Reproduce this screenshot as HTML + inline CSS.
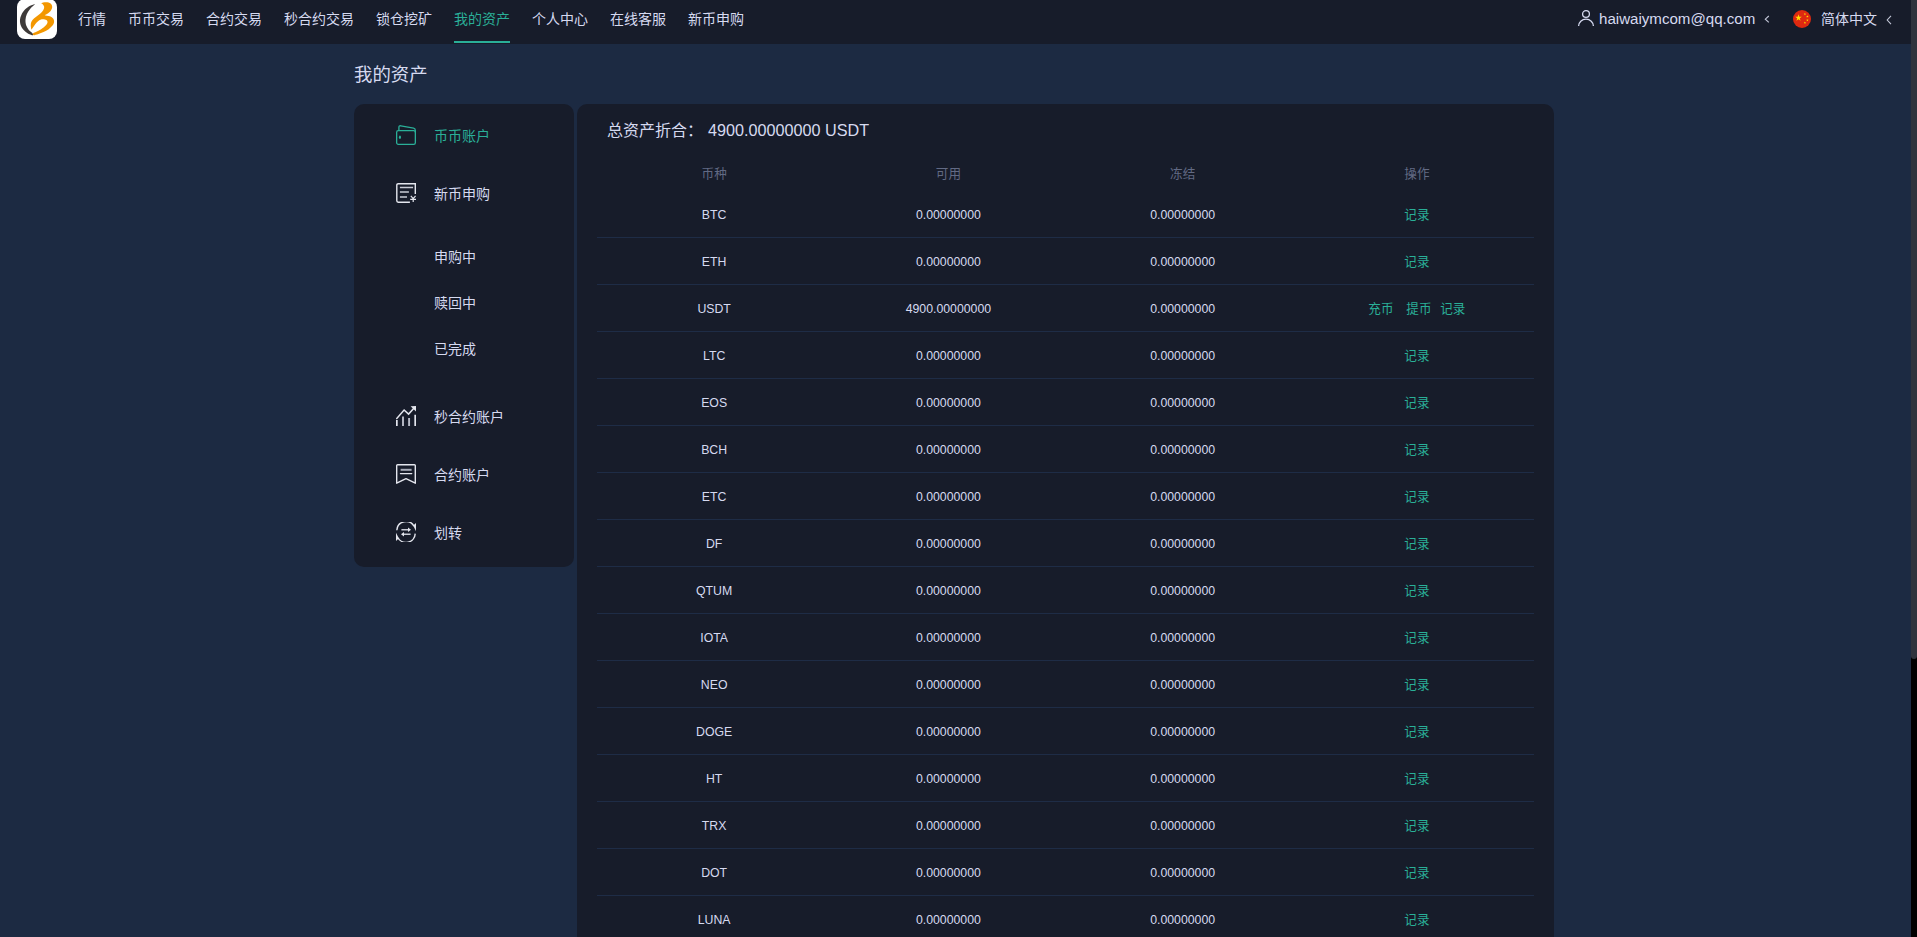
<!DOCTYPE html>
<html lang="zh-CN">
<head>
<meta charset="utf-8">
<title>我的资产</title>
<style>
*{box-sizing:border-box;margin:0;padding:0}
html,body{width:1917px;height:937px;overflow:hidden;background:#1c2a42}
body{position:relative;font-family:"Liberation Sans","Noto Sans CJK SC",sans-serif;color:#d6daf0;font-size:14px}
a{color:inherit;text-decoration:none}
/* header */
#hd{position:absolute;left:0;top:0;width:1911px;height:44px;background:#171c2a}
#logo{position:absolute;left:17px;top:-1px;width:40px;height:40px}
#nav{position:absolute;left:67px;top:0;height:44px;display:flex}
#nav a{display:block;height:44px;line-height:38px;margin:0 11px;font-size:14px;color:#d6daf0;position:relative;white-space:nowrap}
#nav a.on{color:#2aaf98}
#nav a.on:after{content:"";position:absolute;left:0;right:0;top:41px;height:2px;background:#2aaf98}
#usr{position:absolute;left:1577px;top:0;height:44px;line-height:38px;font-size:15.1px;white-space:nowrap}
#usr>svg:first-child{position:absolute;left:0;top:9px}
#usr span.em{position:absolute;left:22px;top:0}
.cv{position:absolute}
#lang{position:absolute;left:1793px;top:0;height:44px;line-height:38px;font-size:14px;white-space:nowrap}
#lang>svg:first-child{position:absolute;left:0;top:10px}
#lang span.t{position:absolute;left:28px;top:0}
/* scrollbar */
#sb{position:absolute;left:1911px;top:0;width:6px;height:937px;background:#000}
#sb i{position:absolute;left:0;top:0;width:6px;height:659px;background:#2f333d;border-radius:0 0 3px 3px}
/* title */
#ttl{position:absolute;left:354px;top:61px;font-size:18.4px;line-height:28px;color:#d6daf0}
/* sidebar */
#side{position:absolute;left:354px;top:104px;width:220px;height:463px;background:#171c2a;border-radius:10px}
#side .it{position:absolute;left:0;width:220px;height:24px;line-height:24px;font-size:14px;color:#d6daf0}
#side .it svg{position:absolute;left:42px;top:2px;width:20px;height:20px}
#side .it span{position:absolute;left:80px;top:1px;white-space:nowrap}
#side .it.sub span{top:0}
#side .it.on{color:#2aaf98}
/* main */
#main{position:absolute;left:577px;top:104px;width:977px;height:900px;background:#171c2a;border-radius:10px 10px 0 0}
#tot{position:absolute;left:30px;top:15px;font-size:16px;line-height:24px;white-space:nowrap}
#tot b{font-weight:normal;position:absolute;left:101px;top:-1px;font-size:16.2px}
#tb{position:absolute;left:20px;top:51px;width:937px}
.r{display:flex;height:47px;line-height:46px;padding-top:1px;border-bottom:1px solid #1e2c46;font-size:12.3px;color:#d6daf0}
.r.h{height:36px;line-height:36px;padding-top:1px;border-bottom:none;color:#626a84}
.r div{flex:0 0 25%;text-align:center;white-space:nowrap}
.r a{color:#2aaf98}
.r a,.r.h{font-size:12.6px}
.r a+a{margin-left:12.8px}
.r a+a+a{margin-left:8.8px}
</style>
</head>
<body>
<div id="hd">
  <svg id="logo" viewBox="0 0 40 40"><rect x="0" y="0" width="40" height="40" rx="8" fill="#fff"/><path fill="#3e3a39" d="M18.09,4.97C17.26,5.27 14.78,5.82 13.10,6.76C11.41,7.70 9.41,9.11 7.97,10.60C6.53,12.10 5.28,14.02 4.45,15.73C3.62,17.44 3.08,19.04 2.98,20.85C2.87,22.66 3.19,24.91 3.81,26.61C4.43,28.32 5.57,29.81 6.69,31.10C7.81,32.38 9.09,33.39 10.53,34.30C11.97,35.20 14.54,36.16 15.34,36.54C15.44,36.27 16.56,35.84 15.98,34.94C15.39,34.03 12.94,32.48 11.81,31.10C10.69,29.71 9.81,28.32 9.25,26.61C8.70,24.91 8.38,22.77 8.49,20.85C8.59,18.93 9.13,16.90 9.89,15.09C10.66,13.27 11.73,11.65 13.10,9.96C14.46,8.28 17.26,5.80 18.09,4.97Z"/><path fill="#f39700" d="M23.98,4.07C24.83,3.93 27.50,3.17 29.10,3.24C30.70,3.32 32.57,3.72 33.59,4.52C34.60,5.32 35.19,6.82 35.19,8.04C35.19,9.27 34.39,10.76 33.59,11.89C32.79,13.01 31.34,14.02 30.38,14.77C29.42,15.51 27.40,15.94 27.82,16.37C28.25,16.79 31.56,16.79 32.95,17.33C34.33,17.86 35.45,18.66 36.15,19.57C36.84,20.48 37.21,21.60 37.11,22.77C37.00,23.95 36.41,25.39 35.51,26.61C34.60,27.84 33.16,29.07 31.66,30.13C30.17,31.20 28.25,32.22 26.54,33.02C24.83,33.82 23.07,34.38 21.42,34.94C19.77,35.49 17.42,36.11 16.62,36.35C16.51,36.03 15.18,35.19 15.98,34.43C16.78,33.66 19.66,32.72 21.42,31.74C23.18,30.75 25.15,29.60 26.54,28.53C27.93,27.47 29.10,26.40 29.74,25.33C30.38,24.27 30.70,22.93 30.38,22.13C30.06,21.33 28.89,20.80 27.82,20.53C26.76,20.26 25.15,20.21 23.98,20.53C22.81,20.85 21.74,21.65 20.78,22.45C19.82,23.25 19.02,24.32 18.22,25.33C17.42,26.35 16.62,27.63 15.98,28.53C15.34,29.44 14.64,30.40 14.38,30.78C14.27,30.08 13.74,27.95 13.74,26.61C13.74,25.28 13.84,23.95 14.38,22.77C14.91,21.60 15.98,20.53 16.94,19.57C17.90,18.61 19.07,17.86 20.14,17.01C21.21,16.15 22.33,15.41 23.34,14.45C24.35,13.49 25.58,12.31 26.22,11.25C26.86,10.18 27.24,9.00 27.18,8.04C27.13,7.08 26.44,6.14 25.90,5.48C25.37,4.82 24.30,4.31 23.98,4.07Z"/></svg>
  <div id="nav">
    <a>行情</a><a>币币交易</a><a>合约交易</a><a>秒合约交易</a><a>锁仓挖矿</a><a class="on">我的资产</a><a>个人中心</a><a>在线客服</a><a>新币申购</a>
  </div>
  <div id="usr"><svg width="18" height="18" viewBox="0 0 18 18" fill="none" stroke="#d6daf0" stroke-width="1.3"><circle cx="9" cy="5.05" r="3.4"/><path d="M1.6,17.1a7.4,6.9 0 0 1 14.8,0"/></svg><span class="em">haiwaiymcom@qq.com</span><svg class="cv" style="left:187px;top:15px" width="6" height="9" viewBox="0 0 6 9" fill="none" stroke="#c3c7d8" stroke-width="1.1"><path d="M4.8,1 L1.3,4.2 L4.8,7.4"/></svg></div>
  <div id="lang"><svg width="18" height="18" viewBox="0 0 18 18"><circle cx="9" cy="9" r="9" fill="#de2910"/><path fill="#ffde00" transform="translate(5.5,7.8) scale(3.5)" d="M0,-1 L0.2245,-0.309 L0.951,-0.309 L0.3633,0.118 L0.5878,0.809 L0,0.382 L-0.5878,0.809 L-0.3633,0.118 L-0.951,-0.309 L-0.2245,-0.309Z"/><path fill="#ffde00" transform="translate(11.9,4.1) scale(1.3)" d="M0,-1 L0.2245,-0.309 L0.951,-0.309 L0.3633,0.118 L0.5878,0.809 L0,0.382 L-0.5878,0.809 L-0.3633,0.118 L-0.951,-0.309 L-0.2245,-0.309Z"/><path fill="#ffde00" transform="translate(14.4,6.5) scale(1.3)" d="M0,-1 L0.2245,-0.309 L0.951,-0.309 L0.3633,0.118 L0.5878,0.809 L0,0.382 L-0.5878,0.809 L-0.3633,0.118 L-0.951,-0.309 L-0.2245,-0.309Z"/><path fill="#ffde00" transform="translate(14.4,10.2) scale(1.3)" d="M0,-1 L0.2245,-0.309 L0.951,-0.309 L0.3633,0.118 L0.5878,0.809 L0,0.382 L-0.5878,0.809 L-0.3633,0.118 L-0.951,-0.309 L-0.2245,-0.309Z"/><path fill="#ffde00" transform="translate(11.9,12.7) scale(1.3)" d="M0,-1 L0.2245,-0.309 L0.951,-0.309 L0.3633,0.118 L0.5878,0.809 L0,0.382 L-0.5878,0.809 L-0.3633,0.118 L-0.951,-0.309 L-0.2245,-0.309Z"/></svg><span class="t">简体中文</span><svg class="cv" style="left:93px;top:15px" width="6" height="10" viewBox="0 0 6 10" fill="none" stroke="#c3c7d8" stroke-width="1.1"><path d="M5,0.8 L1.2,5 L5,9.2"/></svg></div>
</div>
<div id="sb"><i></i></div>
<div id="ttl">我的资产</div>
<div id="side">
  <div class="it on" style="top:19px"><svg viewBox="0 0 20 20" fill="none" stroke="#2aaf98" stroke-width="1.3" stroke-linejoin="round"><rect x="0.65" y="5.6" width="18.7" height="13.75" rx="1.6"/><path d="M2.9,5.6 V2.4 Q2.9,0.5 4.8,0.8 L17.6,3.2 Q19.35,3.6 19.35,5.4 V7.5"/><ellipse cx="3.95" cy="12.3" rx="1.05" ry="1.7" fill="#2aaf98" stroke="none"/></svg><span>币币账户</span></div>
  <div class="it" style="top:77px"><svg viewBox="0 0 20 20" fill="none" stroke="#e4e6ee" stroke-width="1.4"><path d="M19.3,11 V0.7 H2.2 Q0.8,0.7 0.8,2.1 V17.8 Q0.8,19.2 2.2,19.2 H13.9"/><path stroke-width="1.5" stroke="#c9ccd6" d="M3.9,4.4 H17.1 M3.9,9 H12.9 M3.9,13.9 H11"/><path stroke-width="1.2" d="M14.8,12.9 L17.2,15.6 L19.6,12.9 M14.2,16.3 H20 M17.2,15.4 V19.1"/></svg><span>新币申购</span></div>
  <div class="it sub" style="top:141px"><span>申购中</span></div>
  <div class="it sub" style="top:187px"><span>赎回中</span></div>
  <div class="it sub" style="top:233px"><span>已完成</span></div>
  <div class="it" style="top:300px"><svg viewBox="0 0 20 20" fill="none" stroke="#e4e6ee" stroke-width="1.5"><path d="M0.3,13 L8.1,4 L12.6,8.1 L18.3,1.8"/><path fill="#e4e6ee" stroke="none" d="M14.6,0.3 L20,0 L20,5.4Z"/><path stroke-width="1.7" d="M0.85,14 V20 M19.2,8.8 V20"/><path stroke-width="1.9" stroke="#b9bcc8" d="M7,10.4 V20 M13.1,12 V20"/></svg><span>秒合约账户</span></div>
  <div class="it" style="top:358px"><svg viewBox="0 0 20 20" fill="none" stroke="#e4e6ee" stroke-width="1.4" stroke-linejoin="round"><path d="M1.6,0.7 H18.4 Q19.3,0.7 19.3,1.6 V19.2 L10,14.7 L0.7,19.2 V1.6 Q0.7,0.7 1.6,0.7Z"/><path stroke="#a9adba" stroke-width="2" d="M4.6,5.8 H15.6"/><path stroke-width="1.2" stroke-linecap="round" d="M4.4,9.6 H15.8"/></svg><span>合约账户</span></div>
  <div class="it" style="top:416px"><svg viewBox="0 0 20 20" fill="none" stroke="#e4e6ee" stroke-width="1.4"><path d="M0.8,8.2 A9.2,9.2 0 0 1 18,4.2"/><path d="M19.2,11.6 A9.2,9.2 0 0 1 2,15.8"/><path fill="#e4e6ee" stroke="none" d="M20,0.9 V9.2 L17.2,3.6Z M0,19 V10.7 L2.8,16.3Z"/><path stroke="#c9ccd6" stroke-width="1.6" d="M5.4,7.8 H12.5 M14.6,12.3 H7.5"/><path fill="#e4e6ee" stroke="none" d="M12,5.6 L15,7.8 L12,10Z M8,10.1 L5,12.3 L8,14.5Z"/></svg><span>划转</span></div>
</div>
<div id="main">
  <div id="tot">总资产折合：<b>4900.00000000 USDT</b></div>
  <div id="tb">
    <div class="r h"><div>币种</div><div>可用</div><div>冻结</div><div>操作</div></div>
    <div class="r"><div>BTC</div><div>0.00000000</div><div>0.00000000</div><div><a>记录</a></div></div>
    <div class="r"><div>ETH</div><div>0.00000000</div><div>0.00000000</div><div><a>记录</a></div></div>
    <div class="r"><div>USDT</div><div>4900.00000000</div><div>0.00000000</div><div><a>充币</a><a>提币</a><a>记录</a></div></div>
    <div class="r"><div>LTC</div><div>0.00000000</div><div>0.00000000</div><div><a>记录</a></div></div>
    <div class="r"><div>EOS</div><div>0.00000000</div><div>0.00000000</div><div><a>记录</a></div></div>
    <div class="r"><div>BCH</div><div>0.00000000</div><div>0.00000000</div><div><a>记录</a></div></div>
    <div class="r"><div>ETC</div><div>0.00000000</div><div>0.00000000</div><div><a>记录</a></div></div>
    <div class="r"><div>DF</div><div>0.00000000</div><div>0.00000000</div><div><a>记录</a></div></div>
    <div class="r"><div>QTUM</div><div>0.00000000</div><div>0.00000000</div><div><a>记录</a></div></div>
    <div class="r"><div>IOTA</div><div>0.00000000</div><div>0.00000000</div><div><a>记录</a></div></div>
    <div class="r"><div>NEO</div><div>0.00000000</div><div>0.00000000</div><div><a>记录</a></div></div>
    <div class="r"><div>DOGE</div><div>0.00000000</div><div>0.00000000</div><div><a>记录</a></div></div>
    <div class="r"><div>HT</div><div>0.00000000</div><div>0.00000000</div><div><a>记录</a></div></div>
    <div class="r"><div>TRX</div><div>0.00000000</div><div>0.00000000</div><div><a>记录</a></div></div>
    <div class="r"><div>DOT</div><div>0.00000000</div><div>0.00000000</div><div><a>记录</a></div></div>
    <div class="r"><div>LUNA</div><div>0.00000000</div><div>0.00000000</div><div><a>记录</a></div></div>
  </div>
</div>
</body>
</html>
